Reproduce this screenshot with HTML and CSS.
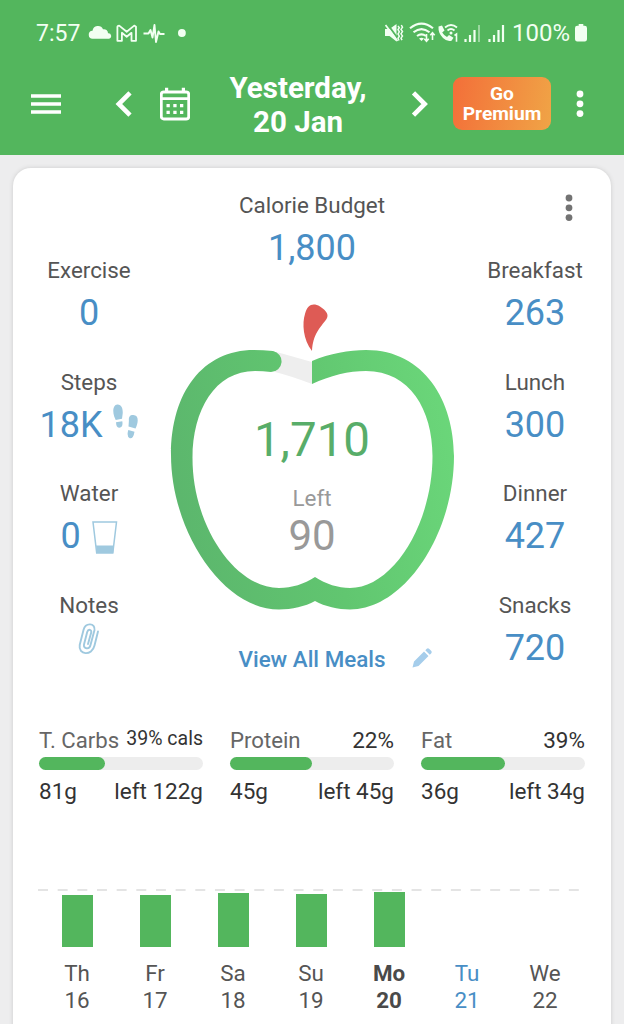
FILE: index.html
```html
<!DOCTYPE html>
<html lang="en">
<head>
<meta charset="utf-8">
<title>Calorie Budget</title>
<link rel="stylesheet" href="styles.css">
</head>
<body>
<header class="top">
  <div class="status">
    <span class="clock">7:57</span>
    <svg class="status-left" width="160" height="24" viewBox="0 0 160 24" fill="#f2fff2">
      <path d="M13 17.500a4 4 0 0 1-.5-8 5.500 5.500 0 0 1 10.500-1.500 4 4 0 0 1 5 4 2.800 2.800 0 0 1 1 5.500z" transform="translate(-1 .3)"/>
      <path d="M37 4.800 38.500 4.300 46 10.500 53.500 4.300 55.300 5.500V19.500H50.800V11.500L46 15.500 41.200 11.500V19.500H36.700V5.500Z" transform="translate(-.3 .3)" fill="none" stroke="#f2fff2" stroke-width="1.800" stroke-linejoin="round"/>
      <path d="M62.500 12.500h5l2-3.500 2 7.500 2-12.500 1.500 17 2.500-10.500 1.500 2.500h4.500" fill="none" stroke="#f2fff2" stroke-width="1.900" stroke-linejoin="round"/>
      <circle cx="100.900" cy="12" r="3.900"/>
    </svg>
    <svg class="status-right" width="126" height="24" viewBox="0 0 126 24" fill="#f2fff2" stroke="#f2fff2" stroke-width="0">
      <path d="M0 8h4.500L11.500 3v17.500L4.500 15H0z"/>
      <path d="M2 2.500 13.500 18.500" stroke="#53b65d" stroke-width="2"/>
      <path d="M.5 4 12.500 20" stroke-width="1.700"/>
      <path d="m13 5 1.300 1.800L13 8.600l1.300 2.200L13 13l1.300 2.200L13 17.400l1 2.100M16.300 4l1.200 2.200-1.500 2.200 1.500 2.200-1.500 2.200 1.500 2.200-1.500 2.200 1 2" fill="none" stroke-width="1.500"/>
      <g fill="none" stroke-width="2.100"><path d="M25 7.300q11.500-9.500 23 0M28.500 11.300q8-6.500 16 0M32 15q4.500-3.300 9 0"/></g>
      <path d="M34 17.500q2.500-1.700 5 0L36.500 20z"/>
      <path d="M41.500 13v7m-2.200-2.200 2.200 2.400 2.200-2.400M47.500 19v-7m-2.200 2.200 2.200-2.400 2.200 2.400" fill="none" stroke-width="1.600"/>
      <path d="M53.500 5.500 57 4.500l2.500 5-2.300 2q1.800 3 4.800 4.500l2-2 4.500 2.700-2 3q-4 1.500-8.500-2.700Q53 12 53.500 5.500z"/>
      <path d="M60 6.500q6-5 12 0M62.500 9.500q3.500-3 7 0" fill="none" stroke-width="1.800"/><circle cx="66" cy="12" r="1.500"/>
      <path d="m69.500 14.500 2-1.500v7.700" fill="none" stroke-width="1.600"/>
      <path d="M80.500 18v3M85 14v7M89.500 9v12" stroke-width="2.200"/><path d="M94 4v17" stroke-width="2" opacity=".45"/>
      <path d="M104.500 18v3M109 14v7M113.500 9v12M118 4v17" stroke-width="2.200"/>
    </svg>
    <span class="percent">100%</span>
    <svg class="battery" width="12" height="18" viewBox="0 0 13 20" preserveAspectRatio="none" fill="#f2fff2"><path d="M4 0h5v2h1.500Q13 2 13 4.500v12Q13 19.500 10.500 19.500h-8Q0 19.500 0 16.500v-12Q0 2 2.500 2H4z"/></svg>
  </div>
  <nav class="bar">
    <svg class="menu" width="30" height="22" viewBox="0 0 30 22" stroke="#fff" stroke-width="3.300"><path d="M0 3h30M0 11h30M0 19h30"/></svg>
    <svg class="prev" width="18" height="28" viewBox="0 0 18 28" fill="none" stroke="#fff" stroke-width="4.600"><path d="M16 2.800 4.800 14 16 25.200"/></svg>
    <svg class="cal" width="30" height="34" viewBox="0 0 30 34" fill="#fff"><rect x="1.300" y="5" width="27.400" height="27" rx="2.500" fill="none" stroke="#fff" stroke-width="2.800"/><path d="M5 .7h3.200V5H5zM21.800.7H25V5h-3.200zM1 10.300h28V13H1z"/><path d="M6.500 17h3.300v3.300H6.500zm6.800 0h3.300v3.300h-3.300zm6.700 0h3.300v3.300H20zM6.500 23.700h3.300V27H6.500zm6.800 0h3.300V27h-3.300zm6.700 0h3.300V27H20z"/></svg>
    <h1 class="date">Yesterday,<br>20 Jan</h1>
    <svg class="next" width="18" height="28" viewBox="0 0 18 28" fill="none" stroke="#fff" stroke-width="4.600"><path d="M2.500 2.800 13.700 14 2.500 25.200"/></svg>
    <button class="premium">Go<br>Premium</button>
    <svg class="more" width="8" height="28" viewBox="0 0 8 28" fill="#fff"><circle cx="4" cy="4" r="3.400"/><circle cx="4" cy="13.800" r="3.400"/><circle cx="4" cy="23.600" r="3.400"/></svg>
  </nav>
</header>
<main class="card">
  <section class="summary">
    <div class="side">
      <div class="stat"><span class="label">Exercise</span><span class="value">0</span></div>
      <div class="stat"><span class="label">Steps</span><span class="value">18K<svg class="steps" width="26" height="36" viewBox="0 0 26 36" fill="#9fc9df"><path d="M1.200 12.500C-.8 6 .5.800 4.300.400 8.800.100 10 5 9.700 9.500L9 14.700 2.700 16zM3 18.300l6.300-1Q10.300 23.300 6.500 23.800 3.200 23.800 3 18.300zM15.500 22.500l.4-5.700C15.300 11 19 10.300 21.300 11.300 26 12 25.300 18.500 22.500 24.500zM15.300 26l6.200 1.700Q20.300 35 16.800 34.300 13.300 32.500 15.300 26z"/></svg></span></div>
      <div class="stat"><span class="label">Water</span><span class="value">0<svg class="glass" width="26" height="33" viewBox="0 0 26 33" fill="none" stroke="#9fc9df" stroke-width="1.500"><path d="M1 1h23.500l-3.700 31H4.700z"/><path d="M4 24.500h18L21.200 32H4.800z" fill="#9fc9df" stroke="none"/></svg></span></div>
      <div class="stat"><span class="label">Notes</span><svg class="clip" width="22" height="32" viewBox="0 0 22 32" fill="none" stroke="#9fc9df" stroke-width="1.900" stroke-linecap="round"><path d="M20 8.500 16.500 22.500C14 33.500 0 32 1.700 22L5.500 7C7.500-1 17.500 0 16.500 7L12.500 22C11.500 27 5 26 6 21.500L9.200 9C10.200 5.500 14 6.500 13.200 9.500L10 21"/></svg></div>
    </div>
    <div class="center">
      <span class="label">Calorie Budget</span>
      <span class="value">1,800</span>
      <div class="apple">
        <svg class="apple-art" width="286" height="312" viewBox="169 301 286 312">
          <defs><linearGradient id="ring" gradientUnits="userSpaceOnUse" x1="171" y1="455" x2="454" y2="400"><stop offset="0" stop-color="#5cb76d"/><stop offset=".5" stop-color="#61c670"/><stop offset="1" stop-color="#6bd77a"/></linearGradient></defs>
          <path d="M272 351 282 353.500Q296 357.500 312 362V384Q291 376 275 372z" fill="#eee"/>
          <path fill="url(#ring)" d="M312 361C330 353.500 349 350 366 350 425 350 454 402 454 456 454 535 404 609.500 350 609.500 338 609.500 325 606.500 315 601 305 606.500 292 609.500 279 609.500 222 609.500 171 530 171 455 171 392 203 350 254 350Q263 350 273 351A10.600 10.600 0 0 1 271 372Q263 371 255 371C215 371 192.500 410 192.500 458 192.500 526 235 588 279 588 292 588 304 584 315 577 326 584 338 588 350 588 393 588 432.500 524 432.500 456 432.500 410 410 371 366 371 349 371 330 375.500 312 384z"/>
          <path fill="#de5b55" d="M312 351C303 340 302 323 305 314 307.500 304.500 313 302.500 320 306.500 327 311 329 315 326.500 319 320 328 313 334 312 351z"/>
        </svg>
        <div class="budget"><strong class="eaten">1,710</strong><span class="left-label">Left</span><span class="left-num">90</span></div>
      </div>
      <a class="meals">View All Meals<svg class="pencil" width="20" height="20" viewBox="0 0 20 20" fill="#a5cdeb"><path d="M.5 19.500 2 13.500 12 3.500l4.500 4.500-10 10zM13.300 2.200l1.500-1.500q1.200-1 2.500.2l1.800 1.800q1.200 1.300.2 2.500l-1.500 1.500z"/></svg></a>
    </div>
    <div class="side">
      <div class="stat"><span class="label">Breakfast</span><span class="value">263</span></div>
      <div class="stat"><span class="label">Lunch</span><span class="value">300</span></div>
      <div class="stat"><span class="label">Dinner</span><span class="value">427</span></div>
      <div class="stat"><span class="label">Snacks</span><span class="value">720</span></div>
    </div>
    <svg class="card-more" width="8" height="28" viewBox="0 0 8 28" fill="#737373"><circle cx="4" cy="4" r="3.400"/><circle cx="4" cy="13.800" r="3.400"/><circle cx="4" cy="23.600" r="3.400"/></svg>
  </section>
  <section class="macros">
    <div class="macro"><div class="row"><span class="name">T. Carbs</span><span class="cals">39% cals</span></div><div class="track"><div class="fill" style="width:40%"></div></div><div class="row"><span>81g</span><span>left 122g</span></div></div>
    <div class="macro"><div class="row"><span class="name">Protein</span><span>22%</span></div><div class="track"><div class="fill" style="width:50%"></div></div><div class="row"><span>45g</span><span>left 45g</span></div></div>
    <div class="macro"><div class="row"><span class="name">Fat</span><span>39%</span></div><div class="track"><div class="fill" style="width:51%"></div></div><div class="row"><span>36g</span><span>left 34g</span></div></div>
  </section>
  <section class="week">
    <svg class="goal" width="542" height="2" viewBox="0 0 542 2"><path d="M0 1h542" stroke="#dcdcdc" stroke-width="1.500" stroke-dasharray="10 9.660"/></svg>
    <div class="day"><div class="plot"><div class="col" style="height:52px"></div></div><span>Th</span><span>16</span></div>
    <div class="day"><div class="plot"><div class="col" style="height:52px"></div></div><span>Fr</span><span>17</span></div>
    <div class="day"><div class="plot"><div class="col" style="height:54px"></div></div><span>Sa</span><span>18</span></div>
    <div class="day"><div class="plot"><div class="col" style="height:53px"></div></div><span>Su</span><span>19</span></div>
    <div class="day current"><div class="plot"><div class="col" style="height:55px"></div></div><span>Mo</span><span>20</span></div>
    <div class="day today"><div class="plot"></div><span>Tu</span><span>21</span></div>
    <div class="day"><div class="plot"></div><span>We</span><span>22</span></div>
  </section>
</main>
</body>
</html>
```
FILE: styles.css
```css
* { box-sizing: border-box; }
body { margin: 0; height: 1024px; overflow: hidden; background: #ededee; font-family: Roboto, "Liberation Sans", sans-serif; font-size: 22.4px; color: #555; }
svg { display: block; flex: none; }
.top { height: 155px; background: #53b65d; color: #fff; }
.status { height: 52px; padding: 21px 0 0 36px; display: flex; align-items: flex-start; color: #f2fff2; }
.clock { width: 45px; font-size: 23px; line-height: 25px; }
.status-right { margin-left: 144px; }
.percent { margin-left: 1px; width: 61px; font-size: 24px; line-height: 25px; }
.battery { margin: 3px 0 0 2px; }
.bar { height: 103px; display: flex; align-items: center; padding-left: 31px; }
.prev { margin-left: 53px; }
.cal { margin-left: 28px; }
.date { width: 160px; margin: 0 0 0 28px; text-align: center; font-size: 29.5px; line-height: 34px; font-weight: 700; padding-top: 2px; }
.next { margin-left: 33px; }
.premium { display: block; margin-left: 24px; width: 98px; height: 53px; padding: 0; border: 0; border-radius: 9px; background: linear-gradient(100deg, #f36f39, #f0a446); color: #fff; font: 700 19.2px/20px Roboto, sans-serif; }
.more { margin-left: 25px; }
.card { width: 598px; height: 880px; margin: 13px 0 0 13px; padding: 0 26px; border-radius: 18px; background: #fff; box-shadow: 0 0 4px #ccc; }
.summary { position: relative; height: 559px; display: grid; grid-template-columns: 100px 1fr 100px; }
.side { padding-top: 89px; }
.stat { height: 111.7px; display: flex; flex-direction: column; align-items: center; }
.label { line-height: 26px; white-space: nowrap; }
.value { display: flex; align-items: center; height: 40px; margin-top: 10px; font-size: 36px; line-height: 40px; color: #488ec5; }
.steps { margin: -5px 0 0 10px; }
.glass { margin: 2px 0 0 11px; }
.clip { margin-top: 5px; }
.center { display: flex; flex-direction: column; align-items: center; padding-top: 24px; }
.center > .value { margin-top: 10px; }
.apple { display: grid; margin-top: 33px; }
.apple-art, .budget { grid-area: 1 / 1; }
.budget { display: flex; flex-direction: column; align-items: center; padding-top: 111px; }
.eaten { font-size: 47.5px; line-height: 56px; font-weight: 400; color: #58ad69; }
.left-label { margin-top: 17px; line-height: 26px; color: #999; }
.left-num { font-size: 42px; line-height: 50px; color: #999; }
.meals { display: flex; align-items: center; margin: 33px 0 0 46px; gap: 26px; line-height: 26px; font-weight: 500; color: #488ec5; }
.pencil { margin-top: -2px; }
.card-more { position: absolute; right: 12px; top: 26px; }
.macros { height: 82px; display: grid; grid-template-columns: repeat(3, 164px); justify-content: space-between; font-size: 22.5px; color: #333; }
.row { display: flex; justify-content: space-between; height: 30px; line-height: 27px; white-space: nowrap; }
.name { font-size: 22.2px; color: #666; }
.cals { font-size: 19.5px; line-height: 23px; }
.track { height: 13px; margin-bottom: 8px; border-radius: 7px; background: #ededed; }
.fill { height: 13px; border-radius: 7px; background: #53b65d; }
.week { position: relative; height: 150px; margin: 57px 0 0 -1px; display: grid; grid-template-columns: repeat(7, 78px); line-height: 27px; }
.goal { position: absolute; left: 0; top: 23px; }
.day { display: flex; flex-direction: column; align-items: center; }
.plot { height: 81px; margin-bottom: 13px; display: flex; align-items: flex-end; }
.col { width: 31px; background: #53b65d; }
.current { font-weight: 700; color: #4a4a4a; }
.today { color: #488ec5; }
```
